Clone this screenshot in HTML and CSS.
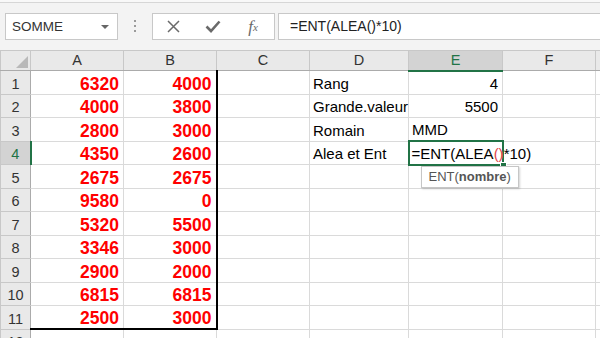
FILE: index.html
```html
<!DOCTYPE html>
<html lang="fr">
<head>
    <meta charset="UTF-8">
    <title>Classeur - ENT(ALEA())</title>
    <link rel="stylesheet" href="styles.css">
</head>
<body>
    <div class="toolbar">
        <div class="namebox">
            <span>SOMME</span>
            <svg class="drop" width="8" height="4" viewBox="0 0 8 4"><polygon points="0,0 8,0 4,4" fill="#666"/></svg>
        </div>
        <div class="grip"><i></i><i></i><i></i></div>
        <div class="fx-buttons">
            <span class="btn">
                <svg width="13" height="13" viewBox="0 0 13 13"><path d="M1 1 L12 12 M12 1 L1 12" stroke="#6a6a6a" stroke-width="1.5" fill="none"/></svg>
            </span>
            <span class="btn">
                <svg width="16" height="13" viewBox="0 0 16 13"><path d="M1.5 6.5 L6 11 L14.5 1.5" stroke="#6a6a6a" stroke-width="2.6" fill="none"/></svg>
            </span>
            <span class="btn fx">f<sub>x</sub></span>
        </div>
        <div class="formula">=ENT(ALEA()*10)</div>
    </div>

    <div class="grid-wrap">
        <table class="sheet">
            <colgroup>
                <col class="w-head">
                <col class="w-col"><col class="w-col"><col class="w-col">
                <col class="w-d"><col class="w-e"><col class="w-col">
                <col class="w-rest">
            </colgroup>
            <thead>
                <tr>
                    <th class="corner"><svg width="12" height="12" viewBox="0 0 12 12"><polygon points="12,0 12,12 0,12" fill="#b9b9b9"/></svg></th>
                    <th>A</th><th>B</th><th>C</th><th>D</th><th class="sel-col">E</th><th>F</th><th></th>
                </tr>
            </thead>
            <tbody>
                <tr><th>1</th><td class="num">6320</td><td class="num box-r">4000</td><td></td><td>Rang</td><td class="right">4</td><td></td><td></td></tr>
                <tr><th>2</th><td class="num">4000</td><td class="num box-r">3800</td><td></td><td>Grande.valeur</td><td class="right">5500</td><td></td><td></td></tr>
                <tr><th>3</th><td class="num">2800</td><td class="num box-r">3000</td><td></td><td>Romain</td><td>MMD</td><td></td><td></td></tr>
                <tr>
                    <th class="sel-row">4</th><td class="num">4350</td><td class="num box-r">2600</td><td></td><td>Alea et Ent</td>
                    <td class="editing">=ENT(ALEA<span class="paren">()</span>*10)<span class="handle"></span><div class="tip">ENT(<b>nombre</b>)</div></td>
                    <td></td><td></td>
                </tr>
                <tr><th>5</th><td class="num">2675</td><td class="num box-r">2675</td><td></td><td></td><td></td><td></td><td></td></tr>
                <tr><th>6</th><td class="num">9580</td><td class="num box-r">0</td><td></td><td></td><td></td><td></td><td></td></tr>
                <tr><th>7</th><td class="num">5320</td><td class="num box-r">5500</td><td></td><td></td><td></td><td></td><td></td></tr>
                <tr><th>8</th><td class="num">3346</td><td class="num box-r">3000</td><td></td><td></td><td></td><td></td><td></td></tr>
                <tr><th>9</th><td class="num">2900</td><td class="num box-r">2000</td><td></td><td></td><td></td><td></td><td></td></tr>
                <tr><th>10</th><td class="num">6815</td><td class="num box-r">6815</td><td></td><td></td><td></td><td></td><td></td></tr>
                <tr><th>11</th><td class="num box-b">2500</td><td class="num box-r box-b">3000</td><td></td><td></td><td></td><td></td><td></td></tr>
                <tr><th>12</th><td></td><td></td><td></td><td></td><td></td><td></td><td></td></tr>
            </tbody>
        </table>
    </div>
</body>
</html>
```

FILE: styles.css
```css
body {
    margin: 0;
    width: 600px;
    height: 338px;
    overflow: hidden;
    background-color: white;
    font-family: "Liberation Sans", Arial, sans-serif;
    color: #000;
}

/* barre de formule */
.toolbar {
    display: flex;
    align-items: flex-start;
    height: 50px;
    box-sizing: border-box;
    padding: 13px 0 0 5px;
    background: linear-gradient(#f8f8f8 0 2px, #d6d6d6 2px 3px, #f3f3f3 3px);
}
.namebox {
    display: flex;
    align-items: center;
    justify-content: space-between;
    width: 113px;
    height: 27px;
    box-sizing: border-box;
    padding: 0 8px 0 6px;
    background-color: white;
    border: 1px solid #c8c8c8;
    font-size: 13.5px;
    color: #333;
}
.grip {
    display: flex;
    flex-direction: column;
    align-items: center;
    gap: 3px;
    width: 34px;
    padding-top: 7px;
}
.grip i {
    width: 2px;
    height: 2px;
    background-color: #9a9a9a;
}
.fx-buttons {
    display: flex;
    width: 123px;
    height: 27px;
    box-sizing: border-box;
    background-color: white;
    border: 1px solid #c8c8c8;
}
.btn {
    display: flex;
    align-items: center;
    justify-content: center;
    width: 40px;
}
.fx {
    font-family: "Liberation Serif", serif;
    font-style: italic;
    font-size: 17px;
    color: #6a6a6a;
}
.fx sub {
    font-size: 11px;
    vertical-align: -2px;
}
.formula {
    flex: 1;
    height: 27px;
    box-sizing: border-box;
    margin-left: 3px;
    padding-left: 11px;
    background-color: white;
    border: 1px solid #c8c8c8;
    border-right: none;
    font-size: 14px;
    line-height: 25px;
    color: #222;
}

/* feuille */
.grid-wrap {
    height: 288px;
    overflow: hidden;
}
.sheet {
    border-collapse: collapse;
    table-layout: fixed;
    width: 600px;
}
.w-head { width: 30px; }
.w-col { width: 93px; }
.w-d { width: 99px; }
.w-e { width: 94px; }
.w-rest { width: 5px; }

.sheet thead tr { height: 20px; }
.sheet tbody tr { height: 23.5px; }

.sheet th,
.sheet td {
    border: 1px solid #dadada;
    padding: 0 4px 1px 3px;
    white-space: nowrap;
    overflow: visible;
}
.sheet thead th {
    padding: 0;
    background-color: #e9e9e9;
    border-color: #c8c8c8 #c8c8c8 #ababab;
    font-weight: normal;
    font-size: 14.5px;
    line-height: 17px;
    color: #333;
}
.sheet thead th.corner {
    text-align: right;
    vertical-align: bottom;
    padding: 0 2px 2px 0;
    line-height: 0;
}
.sheet tbody th {
    padding: 0 0 1px;
    background-color: #e9e9e9;
    border-color: #c8c8c8 #ababab #c8c8c8 #c8c8c8;
    font-weight: normal;
    font-size: 14.5px;
    color: #333;
    vertical-align: bottom;
    line-height: 18px;
}
.sheet td {
    vertical-align: bottom;
    font-size: 15px;
    line-height: 18px;
}
.sheet .sel-col {
    background-color: #d3d3d3;
    color: #217346;
    border-bottom: 2px solid #217346;
}
.sheet tbody .sel-row {
    background-color: #d3d3d3;
    color: #217346;
    border-right: 2px solid #217346;
}
.num {
    text-align: right;
    font-weight: bold;
    font-size: 17.5px !important;
    color: #ff0000;
}
.right {
    text-align: right;
}
.box-r {
    border-right: 2px solid #000 !important;
}
.box-b {
    border-bottom: 2px solid #000 !important;
}
.editing {
    position: relative;
    border: 2px solid #217346 !important;
    padding-left: 2px !important;
}
.paren {
    color: #e0464b;
}
.handle {
    position: absolute;
    right: -5px;
    bottom: -5px;
    width: 5px;
    height: 5px;
    background-color: #217346;
    border: 1px solid white;
}
.tip {
    position: absolute;
    left: 11px;
    top: 24px;
    height: 22px;
    box-sizing: border-box;
    padding: 0 7px;
    background-color: white;
    border: 1px solid #c6c6c6;
    box-shadow: 1px 1px 2px rgba(0,0,0,0.18);
    font-size: 13px;
    line-height: 20px;
    color: #555;
    z-index: 2;
}
```
